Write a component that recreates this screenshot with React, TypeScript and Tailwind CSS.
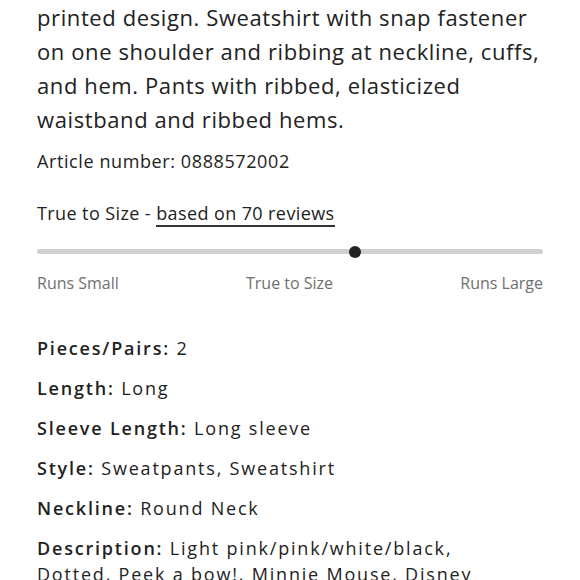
export default function App() {
  const specs = [
    { label: 'Pieces/Pairs:', value: '2' },
    { label: 'Length:', value: 'Long' },
    { label: 'Sleeve Length:', value: 'Long sleeve' },
    { label: 'Style:', value: 'Sweatpants, Sweatshirt' },
    { label: 'Neckline:', value: 'Round Neck' },
  ];

  return (
    <div
      className="w-[580px] h-[580px] overflow-hidden bg-white text-[#222] px-[37px]"
      style={{ fontFamily: '"Open Sans", sans-serif' }}
    >
      {/* product description */}
      <p className="text-[22px] leading-[34px] tracking-[0.6px]">
        <span className="block whitespace-nowrap">printed design. Sweatshirt with snap fastener</span>
        <span className="block whitespace-nowrap">on one shoulder and ribbing at neckline, cuffs,</span>
        <span className="block whitespace-nowrap">and hem. Pants with ribbed, elasticized</span>
        <span className="block whitespace-nowrap">waistband and ribbed hems.</span>
      </p>

      <p className="mt-3 text-[18px] leading-[26px] tracking-[0.6px]">Article number: 0888572002</p>

      {/* fit */}
      <div className="mt-[26px]">
        <p className="text-[18px] leading-[26px] tracking-[0.4px]">
          True to Size -{' '}
          <span className="inline-block border-b-2 border-[#333] leading-[24px]">based on 70 reviews</span>
        </p>
        <div className="relative mt-[22px] h-[5px] rounded-full bg-[#d0d0d0]">
          <div className="absolute left-[312px] top-[-3.5px] w-[12px] h-[12px] rounded-full bg-[#222]" />
        </div>
        <div className="mt-[17px] flex justify-between text-[16px] leading-[24px] text-[#707070]">
          <span>Runs Small</span>
          <span>True to Size</span>
          <span>Runs Large</span>
        </div>
      </div>

      {/* attributes */}
      <div className="mt-[40px] flex flex-col gap-[14px] text-[18px] leading-[26px] tracking-[1.8px]">
        {specs.map((s) => (
          <p key={s.label} className="whitespace-nowrap">
            <span className="font-semibold">{s.label}</span> {s.value}
          </p>
        ))}
        <p className="whitespace-nowrap">
          <span className="font-semibold">Description:</span> Light pink/pink/white/black,
          <br />
          Dotted, Peek a bow!, Minnie Mouse, Disney
        </p>
      </div>
    </div>
  );
}
